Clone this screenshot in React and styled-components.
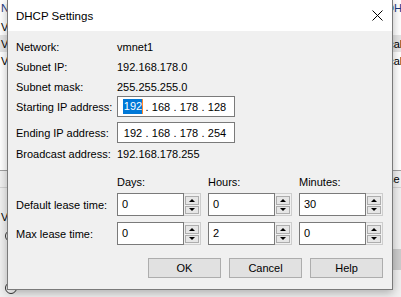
import React from "react";
import styled, { createGlobalStyle } from "styled-components";

const GlobalStyle = createGlobalStyle`
  html, body { margin: 0; padding: 0; width: 401px; height: 297px; overflow: hidden; }
  body { font-family: "Liberation Sans", Arial, sans-serif; font-size: 11px; color: #000; }
  * { box-sizing: border-box; }
`;

const Desktop = styled.div`
  position: relative;
  width: 401px;
  height: 297px;
  overflow: hidden;
  background: #f0f0f0;
`;

/* ---------- background window (mostly hidden) ---------- */
const BackList = styled.div`
  height: 171px;
  background: #fff;
  border-bottom: 1px solid #a0a0a0;
  display: flex;
  flex-direction: column;
`;

const BackRow = styled.div`
  display: grid;
  grid-template-columns: 372px 1fr;
  height: ${(p) => p.$h || 17}px;
  margin-top: ${(p) => p.$mt || 0}px;
  align-items: center;
  padding-left: 1px;
  background: ${(p) => (p.$selected ? "#e5e5e5" : "transparent")};
  color: ${(p) => p.$color || "#000"};
  white-space: nowrap;
  overflow: hidden;
`;

const BackCell = styled.span`
  padding-left: ${(p) => p.$indent || 0}px;
`;

const BackLower = styled.div`
  display: flex;
  flex-direction: column;
`;

const BackHeader = styled.div`
  display: grid;
  grid-template-columns: 380px 1fr;
  height: 17px;
  align-items: center;
  border-bottom: 1px solid #d4d4d4;
  white-space: nowrap;
  overflow: hidden;
`;

const BackText = styled.div`
  margin-top: ${(p) => p.$mt || 0}px;
  padding-left: 1px;
  height: 14px;
  line-height: 14px;
`;

const BackRadioRow = styled.div`
  display: flex;
  align-items: center;
  justify-content: space-between;
  margin-top: ${(p) => p.$mt || 0}px;
  height: ${(p) => p.$h || 12}px;
`;

const Radio = styled.span`
  width: 12px;
  height: 12px;
  margin-left: 5px;
  border-radius: 50%;
  border: 1px solid #333;
  background: #fff;
`;

const BackButton = styled.span`
  width: 60px;
  height: 21px;
  background: #cccccc;
  margin-right: -40px;
`;

/* ---------- dialog ---------- */
const Dialog = styled.div`
  position: absolute;
  left: 7px;
  top: -1px;
  width: 386px;
  height: 291px;
  border: 1px solid #7a7a7a;
  background: #f0f0f0;
  box-shadow: 0 3px 9px rgba(0, 0, 0, 0.28);
  display: flex;
  flex-direction: column;
`;

const TitleBar = styled.div`
  height: 31px;
  flex: none;
  background: #fff;
  display: flex;
  align-items: center;
  justify-content: space-between;
  padding: 0 9px 0 8px;
`;

const Title = styled.span`
  font-size: 11.5px;
  color: #000;
`;

const CloseIcon = () => (
  <svg width="11" height="11" viewBox="0 0 11 11">
    <path d="M0.5 0.5 L10.5 10.5 M10.5 0.5 L0.5 10.5" stroke="#000" strokeWidth="1" fill="none" />
  </svg>
);

const Body = styled.div`
  flex: 1;
  display: flex;
  flex-direction: column;
  padding: 6px 9px 0 8px;
`;

const InfoRow = styled.div`
  display: grid;
  grid-template-columns: 101px 1fr;
  align-items: center;
  height: ${(p) => p.$h}px;
  margin-top: ${(p) => p.$mt || 0}px;
`;

const Label = styled.span`
  white-space: nowrap;
`;

const IpBox = styled.div`
  width: 118px;
  height: 21px;
  border: 1px solid #7a7a7a;
  background: #fff;
  display: flex;
  align-items: center;
  padding-left: 4px;
`;

const Octet = styled.span`
  width: 22px;
  text-align: center;
`;

const Dot = styled.span`
  width: 6px;
  text-align: center;
`;

const Selected = styled.span`
  display: inline-block;
  background: #0078d7;
  color: #fff;
  line-height: 15px;
  padding: 0 0 0 1px;
  border-right: 1px solid #ff8728;
`;

const LeaseRow = styled.div`
  display: grid;
  grid-template-columns: 94px 84px 84px 84px;
  column-gap: 7px;
  align-items: center;
  height: ${(p) => p.$h}px;
  margin-top: ${(p) => p.$mt || 0}px;
`;

const Spin = styled.div`
  display: flex;
  height: 23px;
`;

const SpinInput = styled.div`
  width: 68px;
  height: 23px;
  border: 1px solid #7a7a7a;
  background: #fff;
  padding: 3px 4px 0;
  line-height: 14px;
`;

const SpinCol = styled.div`
  width: 17px;
  height: 23px;
  border: 1px solid #cdcdcd;
  border-left: none;
  padding: 2px 1px 1px 1px;
  display: flex;
  flex-direction: column;
  gap: 1px;
`;

const SpinBtn = styled.div`
  flex: 1;
  border: 1px solid #adadad;
  background: #e6e6e6;
  display: flex;
  align-items: center;
  justify-content: center;
`;

const Arrow = styled.span`
  width: 0;
  height: 0;
  border-left: 3.5px solid transparent;
  border-right: 3.5px solid transparent;
  ${(p) => (p.$down ? "border-top: 3px solid #000;" : "border-bottom: 3px solid #000;")}
`;

const ButtonRow = styled.div`
  display: flex;
  justify-content: flex-end;
  gap: 8px;
  margin-top: 13px;
`;

const Button = styled.div`
  width: 73px;
  height: 20px;
  border: 1px solid #adadad;
  background: #e1e1e1;
  display: flex;
  align-items: center;
  justify-content: center;
`;

const SpinField = ({ value }) => (
  <Spin>
    <SpinInput>{value}</SpinInput>
    <SpinCol>
      <SpinBtn>
        <Arrow />
      </SpinBtn>
      <SpinBtn>
        <Arrow $down />
      </SpinBtn>
    </SpinCol>
  </Spin>
);

const IpField = ({ octets, selectFirst }) => (
  <IpBox>
    {octets.map((o, i) => (
      <React.Fragment key={i}>
        {i > 0 && <Dot>.</Dot>}
        <Octet>{i === 0 && selectFirst ? <Selected>{o}</Selected> : o}</Octet>
      </React.Fragment>
    ))}
  </IpBox>
);

export default function App() {
  return (
    <>
      <GlobalStyle />
      <Desktop>
        <BackList>
          <BackRow $h={15} $color="#1a3a80">
            <BackCell>Name</BackCell>
            <BackCell $indent={13}>DHCP</BackCell>
          </BackRow>
          <BackRow $mt={3}>
            <BackCell>VMnet0</BackCell>
            <BackCell />
          </BackRow>
          <BackRow $selected>
            <BackCell>VMnet1</BackCell>
            <BackCell $indent={3}>Local</BackCell>
          </BackRow>
          <BackRow>
            <BackCell>VMnet8</BackCell>
            <BackCell $indent={3}>Local</BackCell>
          </BackRow>
        </BackList>
        <BackLower>
          <BackHeader>
            <span />
            <span>Use l</span>
          </BackHeader>
          <BackText $mt={22}>VMnet</BackText>
          <BackRadioRow $mt={6}>
            <Radio />
          </BackRadioRow>
          <BackRadioRow $mt={7} $h={21}>
            <span />
            <BackButton />
          </BackRadioRow>
          <BackRadioRow $mt={12}>
            <Radio />
          </BackRadioRow>
        </BackLower>

        <Dialog>
          <TitleBar>
            <Title>DHCP Settings</Title>
            <CloseIcon />
          </TitleBar>
          <Body>
            <InfoRow $h={20}>
              <Label>Network:</Label>
              <span>vmnet1</span>
            </InfoRow>
            <InfoRow $h={20}>
              <Label>Subnet IP:</Label>
              <span>192.168.178.0</span>
            </InfoRow>
            <InfoRow $h={19}>
              <Label>Subnet mask:</Label>
              <span>255.255.255.0</span>
            </InfoRow>
            <InfoRow $h={21}>
              <Label>Starting IP address:</Label>
              <IpField octets={["192", "168", "178", "128"]} selectFirst />
            </InfoRow>
            <InfoRow $h={21} $mt={5}>
              <Label>Ending IP address:</Label>
              <IpField octets={["192", "168", "178", "254"]} />
            </InfoRow>
            <InfoRow $h={21}>
              <Label>Broadcast address:</Label>
              <span>192.168.178.255</span>
            </InfoRow>

            <LeaseRow $h={16} $mt={10}>
              <span />
              <Label>Days:</Label>
              <Label>Hours:</Label>
              <Label>Minutes:</Label>
            </LeaseRow>
            <LeaseRow $h={23} $mt={3}>
              <Label>Default lease time:</Label>
              <SpinField value="0" />
              <SpinField value="0" />
              <SpinField value="30" />
            </LeaseRow>
            <LeaseRow $h={23} $mt={6}>
              <Label>Max lease time:</Label>
              <SpinField value="0" />
              <SpinField value="2" />
              <SpinField value="0" />
            </LeaseRow>

            <ButtonRow>
              <Button>OK</Button>
              <Button>Cancel</Button>
              <Button>Help</Button>
            </ButtonRow>
          </Body>
        </Dialog>
      </Desktop>
    </>
  );
}
